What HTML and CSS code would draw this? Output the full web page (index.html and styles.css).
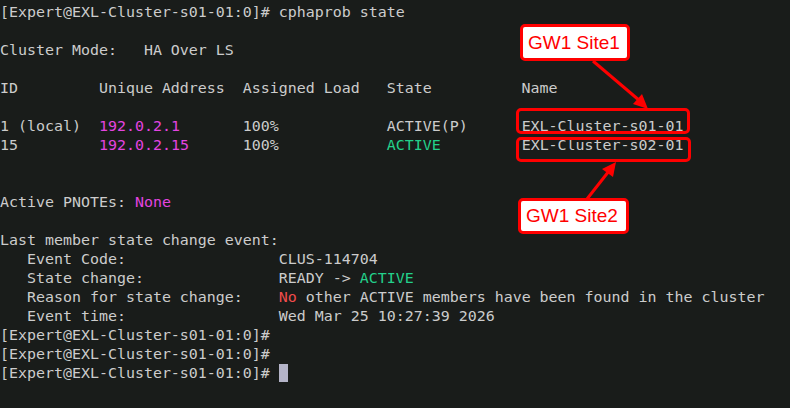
FILE: index.html
```html
<!DOCTYPE html>
<html lang="en">
<head>
<meta charset="utf-8">
<title>cphaprob state</title>
<link rel="stylesheet" href="styles.css">
</head>
<body>
<main class="terminal">
<div class="screen">
  <div class="line">[Expert@EXL-Cluster-s01-01:0]# cphaprob state</div>
  <div class="line"></div>
  <div class="line">Cluster Mode:   HA Over LS</div>
  <div class="line"></div>
  <div class="line">ID         Unique Address  Assigned Load   State          Name</div>
  <div class="line"></div>
  <div class="line"><span>1 (local)  </span><span class="mag">192.0.2.1</span><span>       100%            ACTIVE(P)      EXL-Cluster-s01-01</span></div>
  <div class="line"><span>15         </span><span class="mag">192.0.2.15</span><span>      100%            </span><span class="grn">ACTIVE</span><span>         EXL-Cluster-s02-01</span></div>
  <div class="line"></div>
  <div class="line"></div>
  <div class="line"><span>Active PNOTEs: </span><span class="mag">None</span></div>
  <div class="line"></div>
  <div class="line">Last member state change event:</div>
  <div class="line">   Event Code:                 CLUS-114704</div>
  <div class="line"><span>   State change:               READY -&gt; </span><span class="grn">ACTIVE</span></div>
  <div class="line"><span>   Reason for state change:    </span><span class="red">No</span><span> other ACTIVE members have been found in the cluster</span></div>
  <div class="line">   Event time:                 Wed Mar 25 10:27:39 2026</div>
  <div class="line">[Expert@EXL-Cluster-s01-01:0]#</div>
  <div class="line">[Expert@EXL-Cluster-s01-01:0]#</div>
  <div class="line"><span>[Expert@EXL-Cluster-s01-01:0]# </span><span class="cursor"></span></div>
</div>

<div class="hl hl-1"></div>
<div class="hl hl-2"></div>
<div class="callout callout-1">GW1 Site1</div>
<div class="callout callout-2">GW1 Site2</div>
<svg class="arrows" width="790" height="408" viewBox="0 0 790 408" aria-hidden="true">
  <line x1="593" y1="61" x2="640" y2="101" stroke="#ff0000" stroke-width="3"/>
  <polygon points="648,109 633,104 642,94" fill="#ff0000"/>
  <line x1="587" y1="199" x2="609" y2="171" stroke="#ff0000" stroke-width="3"/>
  <polygon points="616,162 613,177 602,169" fill="#ff0000"/>
</svg>
</main>
</body>
</html>
```

FILE: styles.css
```css
html, body {
  margin: 0;
  padding: 0;
  background: #191c1a;
}

.terminal {
  position: relative;
  width: 790px;
  height: 408px;
  overflow: hidden;
  background: #191c1a;
}

.screen {
  display: flex;
  flex-direction: column;
  padding: 3px 0 0 0;
  font-family: "DejaVu Sans Mono", "Liberation Mono", monospace;
  font-size: 14.95px;
  line-height: 19px;
  color: #cccccc;
}

.line {
  height: 19px;
  white-space: pre;
}

.mag { color: #e444e0; }
.grn { color: #23d18b; }
.red { color: #f14c4c; }

.cursor {
  display: inline-block;
  width: 9px;
  height: 18px;
  vertical-align: -4px;
  background: #b4b4c8;
}

.hl {
  position: absolute;
  box-sizing: border-box;
  border: 3px solid #ff0000;
  border-radius: 5px;
}

.hl-1 { left: 516px; top: 108px; width: 174px; height: 26px; }
.hl-2 { left: 516px; top: 137px; width: 175px; height: 25px; }

.callout {
  position: absolute;
  box-sizing: border-box;
  background: #ffffff;
  border: 3px solid #ff0000;
  border-radius: 5px;
  color: #ff0000;
  font-family: "Liberation Sans", Arial, sans-serif;
  font-size: 19px;
  padding-left: 5px;
  white-space: nowrap;
}

.callout-1 { left: 520px; top: 24px; width: 110px; height: 37px; line-height: 31px; }
.callout-2 { left: 518px; top: 198px; width: 111px; height: 36px; line-height: 30px; }

.arrows {
  position: absolute;
  left: 0;
  top: 0;
  pointer-events: none;
}
```
